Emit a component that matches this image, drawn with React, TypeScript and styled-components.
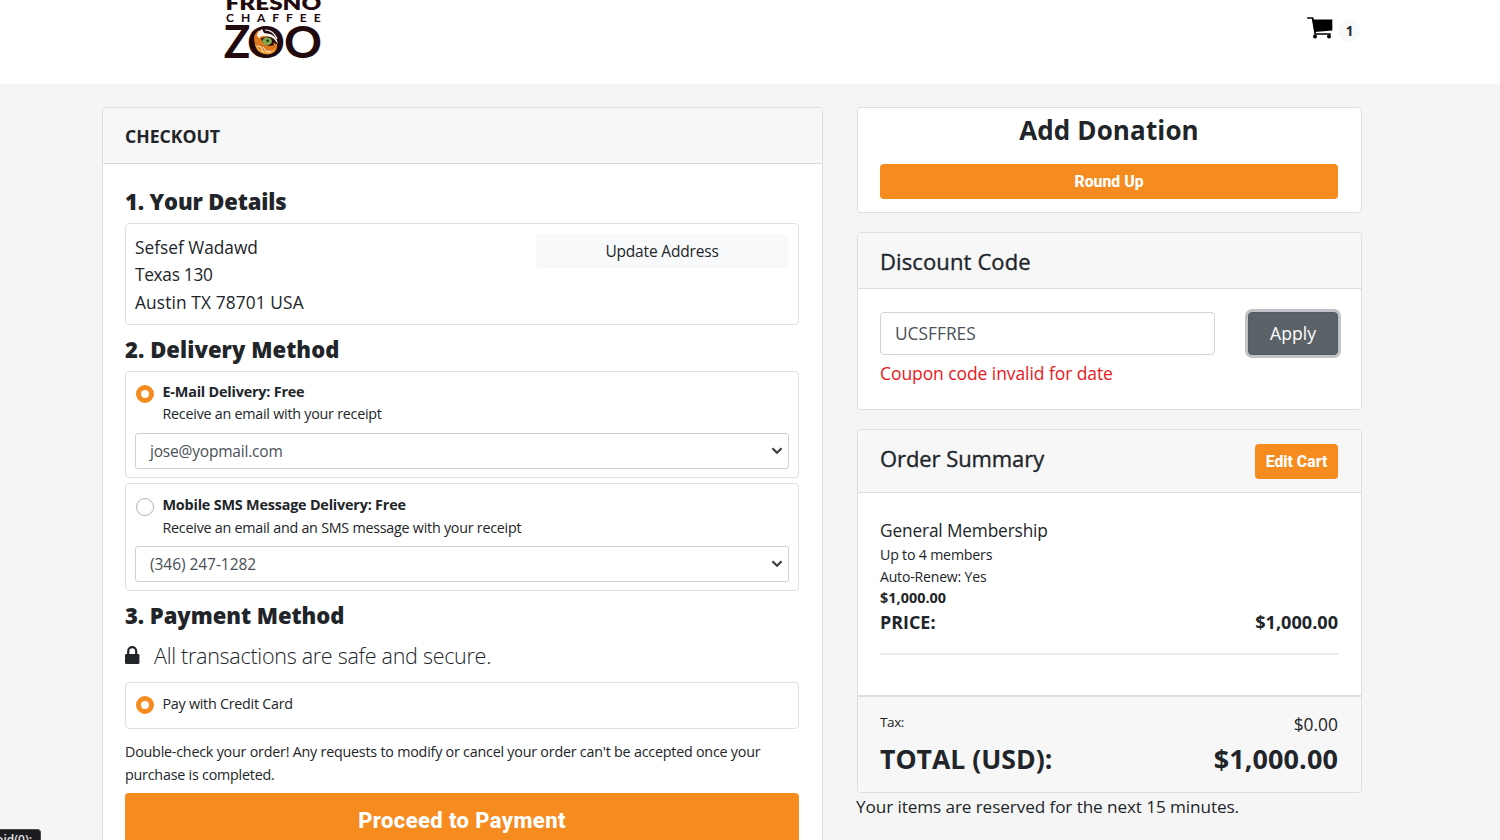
import React from "react";
import styled, { createGlobalStyle } from "styled-components";

const GlobalStyle = createGlobalStyle`
  *, *::before, *::after { box-sizing: border-box; }
  body {
    margin: 0;
    background: #f5f5f5;
    color: #212529;
    font-family: "Open Sans", "Noto Sans", sans-serif;
    overflow: hidden;
  }
  button, input { font-family: inherit; }
`;

const Page = styled.div`
  height: 840px;
  overflow: hidden;
`;

const Header = styled.header`
  display: flex;
  justify-content: space-between;
  height: 84px;
  padding: 0 140px 0 220px;
  background: #fff;
`;

const CartLink = styled.a`
  display: flex;
  gap: 4px;
  padding-top: 15px;
  color: #000;
`;

const Badge = styled.span`
  display: flex;
  align-items: center;
  justify-content: center;
  width: 22px;
  height: 22px;
  margin-top: 5px;
  padding-left: 1px;
  border-radius: 11px;
  background: #f8f9fa;
  color: #212529;
  font-size: 13.5px;
  font-weight: 700;
`;

const Columns = styled.main`
  display: grid;
  grid-template-columns: 721px 505px;
  column-gap: 34px;
  align-items: start;
  padding: 23px 0 0 102px;
`;

const Card = styled.section<{ $h?: number }>`
  height: ${(p) => (p.$h ? `${p.$h}px` : "auto")};
  border: 1px solid #dfdfdf;
  border-radius: 4px;
  background: #fff;
  overflow: hidden;
`;

const CardHeader = styled.header<{ $h: number }>`
  display: flex;
  align-items: center;
  justify-content: space-between;
  height: ${(p) => p.$h}px;
  padding: 0 23px 0 22px;
  border-bottom: 1px solid #dadada;
  background: #f7f7f7;
`;

const CardBody = styled.div`
  padding: 0 23px 0 22px;
`;

const CheckoutTitle = styled.h1`
  margin: 0;
  font-size: 17.6px;
  font-weight: 700;
`;

const CardTitle = styled.h2<{ $size: number; $ls?: number; $lift?: number }>`
  margin: 0;
  padding-bottom: ${(p) => p.$lift ?? 0}px;
  font-size: ${(p) => p.$size}px;
  font-weight: 400;
  -webkit-text-stroke: 0.35px #212529;
  letter-spacing: ${(p) => p.$ls ?? 0}px;
`;

const StepTitle = styled.h3<{ $h: number; $top?: number; $ls?: number }>`
  height: ${(p) => p.$h}px;
  margin: 0;
  padding-top: ${(p) => p.$top ?? 0}px;
  font-size: 22px;
  line-height: 30px;
  font-weight: 800;
  letter-spacing: ${(p) => p.$ls ?? 0}px;
`;

const Box = styled.div<{ $h: number; $gap?: number }>`
  height: ${(p) => p.$h}px;
  margin-bottom: ${(p) => p.$gap ?? 0}px;
  padding: 9px;
  border: 1px solid #dee0e2;
  border-radius: 4px;
`;

const AddressBox = styled(Box)`
  display: flex;
  justify-content: space-between;
  padding: 10px 10px 9px 9px;
`;

const AddressLine = styled.div<{ $ls?: number }>`
  font-size: 17.3px;
  line-height: 27.3px;
  letter-spacing: ${(p) => p.$ls ?? 0}px;
`;

const UpdateButton = styled.button`
  width: 252px;
  height: 34px;
  padding: 0;
  border: 0;
  border-radius: 3px;
  background: #f8f9fa;
  color: #212529;
  font-size: 15.5px;
  letter-spacing: -0.18px;
`;

const Option = styled.label<{ $h: number }>`
  display: flex;
  gap: 9px;
  height: ${(p) => p.$h}px;
  padding-left: 0.5px;
`;

const Radio = styled.span<{ $checked?: boolean; $top: number }>`
  flex: none;
  width: 18px;
  height: 18px;
  margin-top: ${(p) => p.$top}px;
  border: ${(p) => (p.$checked ? "5.5px solid #f68b1f" : "1px solid #adb5bd")};
  border-radius: 50%;
  background: #fff;
`;

const SmallText = styled.div<{ $bold?: boolean; $lh: number; $size?: number; $ls?: number }>`
  font-size: ${(p) => p.$size ?? 14.3}px;
  line-height: ${(p) => p.$lh}px;
  font-weight: ${(p) => (p.$bold ? 700 : 400)};
  letter-spacing: ${(p) => p.$ls ?? -0.24}px;
  white-space: nowrap;
`;

const Select = styled.div<{ $ls: number }>`
  display: flex;
  align-items: center;
  justify-content: space-between;
  height: 36px;
  padding: 0 5px 0 14px;
  border: 1px solid #cbd0d5;
  border-radius: 3px;
  color: #495057;
  font-size: 15.5px;
  letter-spacing: ${(p) => p.$ls}px;
`;

const SecureLine = styled.div`
  display: flex;
  align-items: center;
  gap: 14px;
  height: 28px;
  margin-bottom: 13px;
  font-size: 21.5px;
  font-weight: 300;
  letter-spacing: -0.28px;
`;

const Notice = styled.p`
  margin: 0 0 7px;
  font-size: 14.3px;
  line-height: 23px;
  letter-spacing: -0.215px;
`;

const OrangeButton = styled.button<{ $w: string; $h: number; $size: number; $ls?: number }>`
  display: block;
  width: ${(p) => p.$w};
  height: ${(p) => p.$h}px;
  padding: 0;
  border: 0;
  border-radius: 4px;
  background: #f68b1f;
  color: #fff;
  font-family: Roboto, sans-serif;
  font-size: ${(p) => p.$size}px;
  font-weight: 800;
  letter-spacing: ${(p) => p.$ls ?? 0}px;
`;

const Sidebar = styled.aside`
  display: flex;
  flex-direction: column;
`;

const Stack = styled.div`
  display: flex;
  flex-direction: column;
  gap: 19px;
`;

const DonationTitle = styled.h2`
  margin: 0;
  height: 56px;
  font-size: 26px;
  line-height: 45px;
  font-weight: 700;
  letter-spacing: 0.13px;
  text-align: center;
`;

const CouponRow = styled.div`
  display: flex;
  justify-content: space-between;
  padding: 23px 0 4px;
`;

const CouponInput = styled.input`
  width: 335px;
  height: 43px;
  padding: 0 14px;
  border: 1px solid #ced4da;
  border-radius: 4px;
  outline: 0;
  color: #495057;
  font-size: 17.3px;
  letter-spacing: 0.02px;
`;

const ApplyButton = styled.button`
  width: 90px;
  height: 43px;
  padding: 0 0 1px;
  border: 1px solid #545b62;
  border-radius: 4px;
  background: #5a6268;
  box-shadow: 0 0 0 3px #c0c4c8;
  color: #fff;
  font-size: 17.6px;
`;

const ErrorText = styled.div`
  color: #e8191c;
  font-size: 17.5px;
  line-height: 28px;
  letter-spacing: -0.08px;
`;

const Item = styled.div`
  padding-top: 24px;
  border-bottom: 2px solid #ebebeb;
  height: 162px;
`;

const ItemName = styled.div`
  font-size: 17.3px;
  line-height: 27px;
  letter-spacing: -0.15px;
`;

const Line = styled.div<{ $h: number }>`
  display: flex;
  align-items: center;
  justify-content: space-between;
  height: ${(p) => p.$h}px;
`;

const Amount = styled.span<{ $size: number; $bold?: boolean; $ls?: number; $lift?: number }>`
  padding-bottom: ${(p) => p.$lift ?? 0}px;
  font-size: ${(p) => p.$size}px;
  font-weight: ${(p) => (p.$bold ? 700 : 400)};
  letter-spacing: ${(p) => p.$ls ?? 0}px;
`;

const TaxLabel = styled(SmallText)`
  padding-bottom: 4px;
`;

const SummaryBody = styled(CardBody)`
  height: 202px;
`;

const CardFooter = styled.footer`
  height: 98px;
  padding: 10px 23px 0 22px;
  border-top: 2px solid #dedede;
  background: #f7f7f7;
`;

const Reserved = styled.div`
  margin-left: -1px;
  font-size: 17.2px;
  line-height: 28px;
  letter-spacing: -0.11px;
`;

const StatusBubble = styled.div`
  position: fixed;
  left: 0;
  bottom: 0;
  width: 41px;
  height: 11px;
  padding: 3px 8px 0 0;
  border: 1px solid #48494c;
  border-width: 1px 1px 0 0;
  border-radius: 0 4px 0 0;
  background: #1b1c1f;
  color: #e3e3e3;
  font-size: 12px;
  font-weight: 600;
  line-height: 14px;
  overflow: hidden;
  display: flex;
  justify-content: flex-end;
`;

const Logo = () => (
  <svg width="106" height="62" viewBox="220 0 106 62" fill="#22090d" fontFamily="Lato, sans-serif">
    <text x="225.6" y="9.6" fontSize="19" fontWeight="800" textLength="95.6" lengthAdjust="spacingAndGlyphs">FRESNO</text>
    <text x="226" y="22" fontSize="12" fontWeight="700" textLength="94.6">CHAFFEE</text>
    <text x="223.8" y="57.5" fontSize="45" fontWeight="700" textLength="26.5" lengthAdjust="spacingAndGlyphs">Z</text>
    <text x="247" y="57.5" fontSize="44" fontWeight="700" textLength="38" lengthAdjust="spacingAndGlyphs">O</text>
    <text x="284" y="57.5" fontSize="44" fontWeight="700" textLength="38" lengthAdjust="spacingAndGlyphs">O</text>
    <circle cx="266" cy="41.7" r="13.2" fill="#22090d" />
    <path d="M254 39c0-4 2-7 5-9l0 5 5-1c3 2 4 4 4 7l9 3c1 5-2 9-7 10-8 1-15-4-16-15z" fill="#d9781c" />
    <path d="M255 43c2 5 6 8 12 8 4 0 7-1 9-4-1 6-6 8-11 7-6-1-10-5-10-11z" fill="#f2a23a" />
    <path d="M257 46l4 1 2 5M263 47l3 4 5 1" fill="none" stroke="#fff1df" strokeWidth="1" />
    <path d="M257 36l1-4 4-3 2 4 6 1c5 2 7 5 8 10l-4-5c-4-3-8-3-12-3l-3 2z" fill="#fff5e8" />
    <path d="M265 30c6 0 10 4 12 9" fill="none" stroke="#fff" strokeWidth="1.2" />
    <path d="M261 38.5c4-2 9-1 12 3.5l1 3c-6 2-11 0-13-6.5z" fill="#22090d" />
    <ellipse cx="267.2" cy="41.3" rx="4.8" ry="3.9" fill="#82a94c" />
    <circle cx="267.6" cy="40.8" r="1.3" fill="#1d2a10" />
  </svg>
);

const CartIcon = () => (
  <svg width="27" height="26" viewBox="0 0 27 26" fill="currentColor">
    <path d="M0.2 3h5.4L8.2 19h15.6" fill="none" stroke="currentColor" strokeWidth="1.7" />
    <path d="M5.4 4.6h19.9v10.8L7.6 17z" />
    <circle cx="8" cy="21.6" r="2" />
    <circle cx="22" cy="21.6" r="2" />
  </svg>
);

const LockIcon = () => (
  <svg width="15" height="19" viewBox="0 0 15 19">
    <rect x="0" y="8" width="14.4" height="10" rx="1.2" fill="#212529" />
    <path d="M3.2 9V5.2a4 4 0 0 1 8 0V9" fill="none" stroke="#212529" strokeWidth="2.2" />
  </svg>
);

const Chevron = () => (
  <svg width="12" height="8" viewBox="0 0 12 8">
    <path d="M1.4 1.3L6 5.8l4.6-4.5" fill="none" stroke="#3a3f44" strokeWidth="2.2" />
  </svg>
);

export default function App() {
  return (
    <Page>
      <GlobalStyle />
      <Header>
        <Logo />
        <CartLink>
          <CartIcon />
          <Badge>1</Badge>
        </CartLink>
      </Header>
      <Columns>
        <Card $h={760}>
          <CardHeader $h={56}>
            <CheckoutTitle>CHECKOUT</CheckoutTitle>
          </CardHeader>
          <CardBody>
            <StepTitle $h={59} $top={22} $ls={-0.14}>1. Your Details</StepTitle>
            <AddressBox $h={102}>
              <div>
                <AddressLine>Sefsef Wadawd</AddressLine>
                <AddressLine $ls={-0.3}>Texas 130</AddressLine>
                <AddressLine $ls={0.13}>Austin TX 78701 USA</AddressLine>
              </div>
              <UpdateButton>Update Address</UpdateButton>
            </AddressBox>
            <StepTitle $h={46} $top={9} $ls={0.06}>2. Delivery Method</StepTitle>
            <Box $h={107} $gap={5}>
              <Option $h={52}>
                <Radio $checked $top={4} />
                <div>
                  <SmallText $bold $lh={22} $size={14.4} $ls={-0.2}>E-Mail Delivery: Free</SmallText>
                  <SmallText $lh={22}>Receive an email with your receipt</SmallText>
                </div>
              </Option>
              <Select $ls={-0.2}>jose@yopmail.com<Chevron /></Select>
            </Box>
            <Box $h={108}>
              <Option $h={53}>
                <Radio $top={5} />
                <div>
                  <SmallText $bold $lh={23} $size={14.4} $ls={-0.2}>Mobile SMS Message Delivery: Free</SmallText>
                  <SmallText $lh={23}>Receive an email and an SMS message with your receipt</SmallText>
                </div>
              </Option>
              <Select $ls={-0.05}>(346) 247-1282<Chevron /></Select>
            </Box>
            <StepTitle $h={50} $top={9} $ls={-0.04}>3. Payment Method</StepTitle>
            <SecureLine>
              <LockIcon />
              All transactions are safe and secure.
            </SecureLine>
            <Box $h={47} $gap={11}>
              <Option $h={28}>
                <Radio $checked $top={4} />
                <SmallText $lh={23} $ls={-0.25}>Pay with Credit Card</SmallText>
              </Option>
            </Box>
            <Notice>
              Double-check your order! Any requests to modify or cancel your order can't be accepted once your
              <br />
              purchase is completed.
            </Notice>
            <OrangeButton $w="100%" $h={55} $size={22} $ls={0.4}>Proceed to Payment</OrangeButton>
          </CardBody>
        </Card>
        <Sidebar>
          <Stack>
            <Card $h={106}>
              <CardBody>
                <DonationTitle>Add Donation</DonationTitle>
                <OrangeButton $w="100%" $h={35} $size={15.8}>Round Up</OrangeButton>
              </CardBody>
            </Card>
            <Card $h={178}>
              <CardHeader $h={56}>
                <CardTitle $size={22} $ls={0.12}>Discount Code</CardTitle>
              </CardHeader>
              <CardBody>
                <CouponRow>
                  <CouponInput defaultValue="UCSFFRES" />
                  <ApplyButton>Apply</ApplyButton>
                </CouponRow>
                <ErrorText>Coupon code invalid for date</ErrorText>
              </CardBody>
            </Card>
            <Card $h={364}>
              <CardHeader $h={63}>
                <CardTitle $size={22} $ls={-0.08} $lift={6}>Order Summary</CardTitle>
                <OrangeButton $w="83px" $h={35} $size={15.8}>Edit Cart</OrangeButton>
              </CardHeader>
              <SummaryBody>
                <Item>
                  <ItemName>General Membership</ItemName>
                  <SmallText $lh={21.5} $size={14.2} $ls={-0.2}>Up to 4 members</SmallText>
                  <SmallText $lh={21.5} $size={14} $ls={-0.16}>Auto-Renew: Yes</SmallText>
                  <SmallText $bold $lh={21.5} $size={14.4} $ls={0.03}>$1,000.00</SmallText>
                  <Line $h={27}>
                    <Amount $bold $size={17.9}>PRICE:</Amount>
                    <Amount $bold $size={18.1}>$1,000.00</Amount>
                  </Line>
                </Item>
              </SummaryBody>
              <CardFooter>
                <Line $h={33}>
                  <TaxLabel $lh={24} $size={13.5} $ls={-0.4}>Tax:</TaxLabel>
                  <Amount $size={17.4}>$0.00</Amount>
                </Line>
                <Line $h={38}>
                  <Amount $bold $size={26.6}>TOTAL (USD):</Amount>
                  <Amount $bold $size={27} $ls={0.1} $lift={2}>$1,000.00</Amount>
                </Line>
              </CardFooter>
            </Card>
          </Stack>
          <Reserved>Your items are reserved for the next 15 minutes.</Reserved>
        </Sidebar>
      </Columns>
      <StatusBubble>void(0);</StatusBubble>
    </Page>
  );
}
